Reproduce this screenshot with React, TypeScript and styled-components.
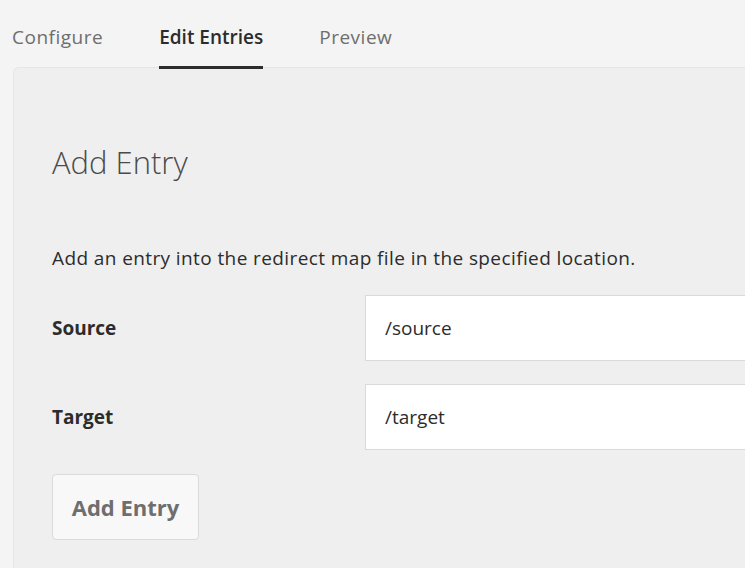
import { useState } from "react";
import styled, { createGlobalStyle } from "styled-components";

const GlobalStyle = createGlobalStyle`
  html, body {
    margin: 0;
    padding: 0;
    background: #f4f4f4;
    overflow: hidden;
  }
  body {
    font-family: "Open Sans", "Liberation Sans", sans-serif;
    color: #2c2c2c;
  }
`;

const tabs = ["Configure", "Edit Entries", "Preview"];

const App = () => {
  const [active, setActive] = useState(1);
  const [source, setSource] = useState("/source");
  const [target, setTarget] = useState("/target");

  return (
    <>
      <GlobalStyle />
      <Page>
        <TabBar>
          {tabs.map((tab, index) => (
            <Tab key={tab} $active={index === active} onClick={() => setActive(index)}>
              {tab}
            </Tab>
          ))}
        </TabBar>
        <Panel>
          <Heading>Add Entry</Heading>
          <Description>Add an entry into the redirect map file in the specified location.</Description>
          <FieldRow>
            <Label htmlFor="source">Source</Label>
            <Input id="source" value={source} onChange={(e) => setSource(e.target.value)} />
          </FieldRow>
          <FieldRow>
            <Label htmlFor="target">Target</Label>
            <Input id="target" value={target} onChange={(e) => setTarget(e.target.value)} />
          </FieldRow>
          <AddButton type="button">Add Entry</AddButton>
        </Panel>
      </Page>
    </>
  );
};

export default App;

const Page = styled.div`
  height: 568px;
  display: flex;
  flex-direction: column;
  padding-left: 13px;
  box-sizing: border-box;
`;

// the active tab's underline sits over the panel's top edge
const TabBar = styled.div`
  position: relative;
  z-index: 1;
  display: flex;
  gap: 56px;
  height: 69px;
  margin: 0 0 -2px -1px;
`;

const Tab = styled.button<{ $active: boolean }>`
  appearance: none;
  background: transparent;
  border: none;
  padding: 24px 0 0;
  margin: 0;
  font-family: inherit;
  font-size: 19px;
  letter-spacing: ${(p) => (p.$active ? "0" : "0.5px")};
  font-weight: ${(p) => (p.$active ? 600 : 400)};
  color: ${(p) => (p.$active ? "#2c2c2c" : "#6e6e6e")};
  border-bottom: 3px solid ${(p) => (p.$active ? "#2c2c2c" : "transparent")};
  height: 69px;
  box-sizing: border-box;
  display: flex;
  align-items: flex-start;
  cursor: pointer;
`;

const Panel = styled.div`
  flex: 1;
  background: #efefef;
  border-top: 1px solid #e6e6e6;
  border-left: 1px solid #e6e6e6;
  border-top-left-radius: 6px;
  padding: 74px 0 0 38px;
  display: flex;
  flex-direction: column;
  align-items: flex-start;
`;

const Heading = styled.h2`
  margin: 0;
  font-size: 31px;
  font-weight: 300;
  color: #4b4b4b;
  line-height: 40px;
`;

const Description = styled.p`
  margin: 64px 0 0;
  font-size: 19px;
  letter-spacing: 0.4px;
  line-height: 24px;
  color: #2c2c2c;
`;

const FieldRow = styled.div`
  display: flex;
  align-items: center;
  width: 100%;
  margin-top: 25px;
  & + & {
    margin-top: 23px;
  }
`;

const Label = styled.label`
  width: 313px;
  font-size: 19px;
  font-weight: 700;
  color: #2c2c2c;
`;

const Input = styled.input`
  flex: 1;
  height: 66px;
  box-sizing: border-box;
  border: 1px solid #dadada;
  border-right: none;
  background: #fff;
  padding: 0 19px;
  font-family: inherit;
  font-size: 19px;
  color: #2c2c2c;
  outline: none;
`;

const AddButton = styled.button`
  margin-top: 24px;
  width: 147px;
  height: 66px;
  box-sizing: border-box;
  background: #f8f8f8;
  border: 1px solid #dadada;
  border-radius: 4px;
  font-family: inherit;
  font-size: 22px;
  font-weight: 700;
  color: #6e6e6e;
  cursor: pointer;
`;
